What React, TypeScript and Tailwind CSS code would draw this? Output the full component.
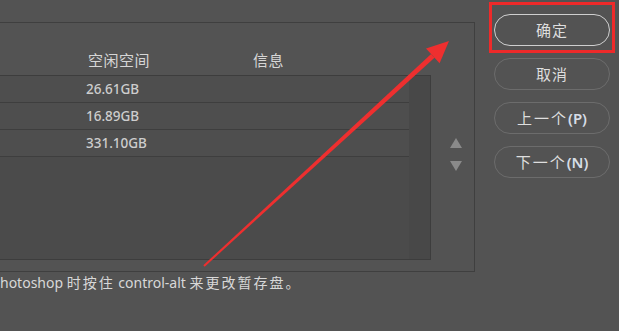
const font = { fontFamily: '"Noto Sans", "Noto Sans CJK SC", sans-serif' };

const rows = ["26.61GB", "16.89GB", "331.10GB"];

function DialogButton({ label, hotkey, primary }: { label: string; hotkey?: string; primary?: boolean }) {
  return (
    <div
      className={
        "flex h-[32px] w-[116px] items-center justify-center rounded-full text-[15px] text-[#dedede] " +
        (primary ? "border-[1.5px] border-[#cfcfcf]" : "border border-[#6c6c6c]")
      }
    >
      <span className={hotkey ? "tracking-[2px]" : "tracking-[1px]"}>{label}</span>
      {hotkey && <span className="font-semibold text-[#d6dde6]">{hotkey}</span>}
    </div>
  );
}

export default function App() {
  return (
    <div
      className="relative flex h-[331px] w-[619px] overflow-hidden bg-[#535353] text-[#d2d2d2]"
      style={font}
    >
      <div className="flex w-[475px] flex-col">
        <div className="mt-[22px] flex h-[250px] border-y border-r border-[#3f3f3f]">
          <div className="flex w-[431px] flex-col">
            <div className="flex h-[52px] items-end pb-[4px] text-[15px] text-[#d6d6d6]">
              <span className="ml-[88px] tracking-[0.5px]">空闲空间</span>
              <span className="ml-[103px] tracking-[0.5px]">信息</span>
            </div>
            <div className="flex h-[185px] border-y border-r border-[#3d3d3d] bg-[#4b4b4b]">
              <div className="flex w-[409px] flex-col">
                {rows.map((r) => (
                  <div
                    key={r}
                    className="flex h-[27px] items-center border-b border-[#3e3e3e] bg-[#4e4e4e] pl-[86px] text-[13.5px] font-medium text-[#cdcdcd]"
                  >
                    {r}
                  </div>
                ))}
              </div>
              <div className="w-[21px] bg-[#484848]" />
            </div>
          </div>
          <div className="flex flex-1 flex-col items-center pt-[115px]">
            <svg width="12" height="10" viewBox="0 0 12 10" className="ml-[6px]">
              <polygon points="6,0 12,10 0,10" fill="#8a8a8a" />
            </svg>
            <svg width="12" height="10" viewBox="0 0 12 10" className="ml-[6px] mt-[13px]">
              <polygon points="0,0 12,0 6,10" fill="#8a8a8a" />
            </svg>
          </div>
        </div>
        <div className="mt-[1px] whitespace-nowrap text-[14px] leading-[20px] text-[#d8d8d8]">
          hotoshop <span className="tracking-[2px]">时按住</span> control-alt{" "}
          <span className="tracking-[2px]">来更改暂存盘。</span>
        </div>
      </div>

      <div className="ml-[19px] mt-[14px] flex flex-col gap-[12px]">
        <DialogButton label="确定" primary />
        <DialogButton label="取消" />
        <DialogButton label="上一个" hotkey="(P)" />
        <DialogButton label="下一个" hotkey="(N)" />
      </div>

      {/* highlight box */}
      <div className="pointer-events-none absolute left-[489px] top-[2px] h-[51px] w-[126px] border-[3px] border-[#ee2a2a]" />

      {/* red annotation arrow */}
      <svg className="pointer-events-none absolute left-0 top-0" width="619" height="331">
        <polygon
          points="203.3,265.3 204.7,266.7 434.5,57.7 431.1,54.1"
          fill="#ee2f2f"
        />
        <polygon points="449,41 439.6,63.3 426,48.5" fill="#ee2f2f" />
      </svg>
    </div>
  );
}
